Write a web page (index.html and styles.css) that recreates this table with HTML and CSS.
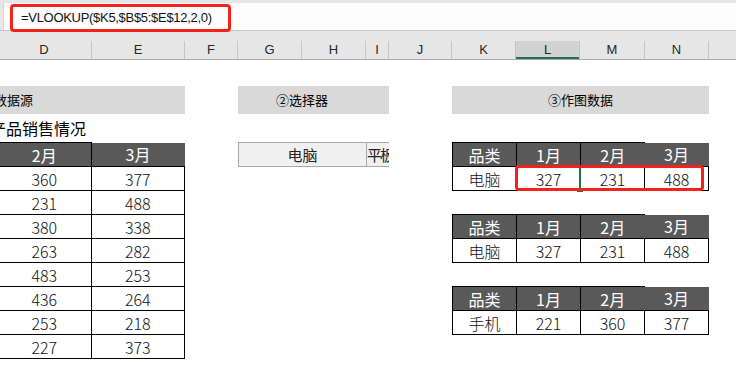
FILE: index.html
```html
<!DOCTYPE html>
<html>
  <head>
    <meta charset="utf-8">
    <link rel="stylesheet" href="styles.css">
  </head>
  <body>
    <div id="formulaBar">
      <div class="fx-area">
        <div class="fx-input">=VLOOKUP($K5,$B$5:$E$12,2,0)</div>
      </div>
    </div>

    <div id="colHeads" class="cols">
      <div class="col-head">D</div>
      <div class="col-head">E</div>
      <div class="col-head">F</div>
      <div class="col-head">G</div>
      <div class="col-head">H</div>
      <div class="col-head">I</div>
      <div class="col-head">J</div>
      <div class="col-head">K</div>
      <div class="col-head active">L</div>
      <div class="col-head">M</div>
      <div class="col-head">N</div>
      <div class="col-head last"></div>
    </div>

    <div id="sheet" class="cols">
      <div class="block-title src-title"><span class="src-text">①数据源</span></div>
      <div class="block-title pick-title"><span>②选择器</span></div>
      <div class="block-title plot-title">③作图数据</div>

      <div class="src-caption"><span>产品销售情况</span></div>

      <div class="src-table">
        <table class="grid">
          <tr><th>2月</th><th class="open">3月</th></tr>
          <tr><td>360</td><td>377</td></tr>
          <tr><td>231</td><td>488</td></tr>
          <tr><td>380</td><td>338</td></tr>
          <tr><td>263</td><td>282</td></tr>
          <tr><td>483</td><td>253</td></tr>
          <tr><td>436</td><td>264</td></tr>
          <tr><td>253</td><td>218</td></tr>
          <tr><td>227</td><td>373</td></tr>
        </table>
      </div>

      <div class="picker">
        <div class="pick-on">电脑</div>
        <div class="pick-off">平板</div>
      </div>

      <div class="plot plot-a">
        <table class="grid">
          <tr><th>品类</th><th>1月</th><th>2月</th><th class="open">3月</th></tr>
          <tr><td>电脑</td><td>327</td><td>231</td><td>488</td></tr>
        </table>
        <div class="cursor"></div>
        <div class="hl"></div>
      </div>

      <div class="plot plot-b">
        <table class="grid">
          <tr><th>品类</th><th>1月</th><th>2月</th><th class="open">3月</th></tr>
          <tr><td>电脑</td><td>327</td><td>231</td><td>488</td></tr>
        </table>
      </div>

      <div class="plot plot-c">
        <table class="grid">
          <tr><th>品类</th><th>1月</th><th>2月</th><th class="open">3月</th></tr>
          <tr><td>手机</td><td>221</td><td>360</td><td>377</td></tr>
        </table>
      </div>
    </div>
  </body>
</html>
```

FILE: styles.css
```css
html, body {
  margin: 0;
  padding: 0;
  height: 100%;
  overflow: hidden;
  background-color: #fff;
  font-family: "Noto Sans CJK SC", "Noto Sans", sans-serif;
  color: #000;
}

/* formula bar */
#formulaBar {
  height: 27px;
  padding: 3px 0 0 3px;
  background: #e6e6e6;
  border-bottom: 1px solid #c6c6c6;
}
.fx-area {
  height: 26px;
  padding-top: 1px;
  background: #fdfdfd;
  border-left: 1px solid #d6d6d6;
}
.fx-input {
  position: relative;
  z-index: 2;
  box-sizing: border-box;
  width: 221px;
  height: 28px;
  margin-left: 6px;
  padding-left: 8px;
  border: 3px solid #f3231b;
  border-radius: 4px;
  font: 13px/22px "Liberation Sans", Arial, sans-serif;
  letter-spacing: -0.3px;
  color: #111;
}

/* shared column layout: D..N plus the rest */
.cols {
  display: grid;
  grid-template-columns: 95px 93px 53px 64px 64px 23px 63px 64px 64px 65px 64px 1fr;
  margin-left: -3px;
}

#colHeads {
  padding-top: 10px;
  background: #e6e6e6;
  border-bottom: 1px solid #ababab;
}
.col-head {
  height: 18px;
  border-right: 1px solid #c6c6c6;
  text-align: center;
  font: 13px/18px "Liberation Sans", Arial, sans-serif;
  color: #262626;
}
.col-head.last {
  border-right: none;
}
.col-head.active {
  background: #d2d2d2;
  box-shadow: inset 0 -2px #217346;
}

/* sheet */
#sheet {
  grid-template-rows: 26px 28px 28px repeat(9, 24px);
}
.block-title {
  grid-row: 2;
  background: #d9d9d9;
  font-size: 13px;
  line-height: 28px;
  white-space: nowrap;
  overflow: hidden;
}
.src-title {
  grid-column: 1 / 3;
}
.src-text {
  margin-left: -16px;
}
.pick-title {
  grid-column: 4 / 7;
  padding-right: 23px;
  text-align: center;
}
.plot-title {
  grid-column: 8 / 12;
  text-align: center;
}

.src-caption {
  grid-column: 1 / 3;
  grid-row: 3;
  font-size: 16px;
  line-height: 28px;
  white-space: nowrap;
}
.src-caption span {
  margin-left: -7px;
}

.src-table {
  grid-column: 1 / 3;
  grid-row: 4 / 13;
}
.plot {
  position: relative;
  grid-column: 8 / 12;
}
.plot-a { grid-row: 4 / 6; }
.plot-b { grid-row: 7 / 9; }
.plot-c { grid-row: 10 / 12; }

table.grid {
  width: 100%;
  table-layout: fixed;
  border-collapse: collapse;
  font-size: 16px;
}
.grid tr {
  height: 24px;
}
.grid th,
.grid td {
  padding: 0;
  border: 1px solid #000;
  text-align: center;
  line-height: 22px;
  white-space: nowrap;
}
.grid th {
  background: #595959;
  color: #fff;
  font-weight: normal;
}
.grid th.open {
  border-top-style: hidden;
  border-right-style: hidden;
}
.plot th.open {
  border-left-style: hidden;
}
.grid td {
  font-weight: 300;
  color: #111;
}

/* selection marks on the first chart table */
.cursor {
  position: absolute;
  left: 127px;
  top: 24px;
  width: 2px;
  height: 24px;
  background: #217346;
}
.cursor::after {
  content: "";
  position: absolute;
  left: -2px;
  bottom: -2px;
  width: 6px;
  height: 4px;
  background: #217346;
}
.hl {
  position: absolute;
  left: 63px;
  top: 23px;
  width: 189px;
  height: 26px;
  box-sizing: border-box;
  border: 3px solid #f3231b;
  border-radius: 4px;
}

/* dropdown-style selector */
.picker {
  grid-column: 4 / 7;
  grid-row: 4;
  display: flex;
  height: 25px;
  box-sizing: border-box;
  border: 1px solid #a9a9a9;
  border-right: none;
  background: #f0f0f0;
  overflow: hidden;
  font-size: 15px;
  line-height: 23px;
  color: #222;
}
.pick-on {
  flex: 0 0 128px;
  box-sizing: border-box;
  border-right: 1px solid #a9a9a9;
  text-align: center;
}
.pick-off {
  white-space: nowrap;
  letter-spacing: -2px;
}
```
